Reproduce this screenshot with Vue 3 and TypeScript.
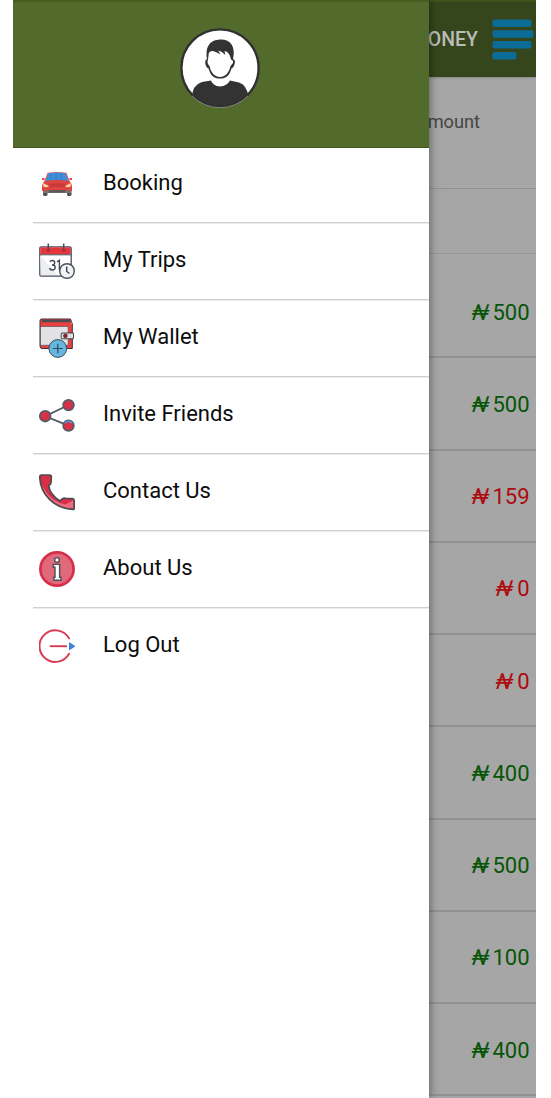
<script setup lang="ts">
interface MenuItem {
  label: string
  icon: string
}

interface Entry {
  amount: number
  credit: boolean
}

const menu: MenuItem[] = [
  { label: 'Booking', icon: 'car' },
  { label: 'My Trips', icon: 'calendar' },
  { label: 'My Wallet', icon: 'wallet' },
  { label: 'Invite Friends', icon: 'share' },
  { label: 'Contact Us', icon: 'phone' },
  { label: 'About Us', icon: 'info' },
  { label: 'Log Out', icon: 'logout' },
]

const entries: Entry[] = [
  { amount: 500, credit: true },
  { amount: 500, credit: true },
  { amount: 159, credit: false },
  { amount: 0, credit: false },
  { amount: 0, credit: false },
  { amount: 400, credit: true },
  { amount: 500, credit: true },
  { amount: 100, credit: true },
  { amount: 400, credit: true },
]
</script>

<template>
  <div class="screen">
    <main class="page">
      <header class="toolbar">
        <span class="toolbar-title">ONEY</span>
        <svg class="bars" width="42" height="42" viewBox="0 0 42 42" fill="#0b6d97">
          <rect x="0.5" y="0.5" width="39" height="7.5" rx="2" />
          <rect x="0.5" y="11.3" width="41" height="7.5" rx="2" />
          <rect x="0.5" y="22" width="39" height="7.5" rx="2" />
          <rect x="0.5" y="33" width="24" height="7.5" rx="2" />
        </svg>
      </header>
      <div class="field">mount</div>
      <div class="spacer"></div>
      <ul class="entries">
        <li v-for="(entry, i) in entries" :key="i" class="entry" :class="{ credit: entry.credit }">
          <span class="currency">₦</span>
          <span>{{ entry.amount }}</span>
        </li>
      </ul>
    </main>

    <aside class="drawer">
      <div class="profile">
        <svg width="80" height="80" viewBox="0 0 80 80">
          <defs>
            <clipPath id="face"><circle cx="40" cy="40" r="38.6" /></clipPath>
          </defs>
          <circle cx="40" cy="40" r="38.7" fill="#fff" />
          <g clip-path="url(#face)">
            <path d="M12 70Q12 57 22 54L31 52.5Q33 58 40 58.5Q47 58 50 52.5L59 54.5Q67 57 68.5 69V80H12z" fill="#333" />
            <path d="M27 31C25 17 31 12 40 11.5C50 11 56 18 53 31C57 32 54 40 51.5 40.5C49 49 45 50.5 40 50.5C35 50.5 31 49 28.5 40.5C25 39 24 32 27 31z" fill="#333" />
            <path d="M28.8 25Q30 22.5 33 23Q37 24 40.3 26.5L38.3 22.5Q42 23 45.3 27L44.5 23Q49.5 23.5 51 31.5Q53.5 32 53 35L50.5 38C49 45 45 49 40 49C35 49 31 45 29.5 38Q26.5 35 28 31.5z" fill="#fff" />
          </g>
          <circle cx="40" cy="40" r="38.6" fill="none" stroke="#2f3130" stroke-width="2.4" />
          <path d="M12 68A39.3 39.3 0 0 0 68 68" fill="none" stroke="#8b9083" stroke-width="0.9" />
        </svg>
      </div>

      <nav class="menu">
        <a v-for="item in menu" :key="item.label" class="item">
          <svg v-if="item.icon === 'car'" class="icon" viewBox="0 0 36 36">
            <rect x="4" y="24" width="4.5" height="6" rx="1.5" fill="#585353" />
            <rect x="28" y="24" width="4.5" height="6" rx="1.5" fill="#585353" />
            <path d="M8.5 6.8Q18 5.2 27.5 6.8L31 16H5z" fill="#e8615c" />
            <path d="M9.5 7.2Q18 6 26.5 7.2L29.6 15Q18 16 6.5 15z" fill="#3d8fda" />
            <path d="M12 8v7M17 8v7M22 8v7" stroke="#3580c8" stroke-width="1.2" />
            <path d="M3 12h2.5v2H3zM30.5 12H33v2h-2.5z" fill="#e84b4a" />
            <path d="M6 15Q18 13.2 30 15Q33 17 33 21V25H3V21Q3 17 6 15z" fill="#e04440" />
            <path d="M9 18Q18 16.5 27 18L25 21H11z" fill="#c8393a" />
            <path d="M4 17L10 20Q8 22 4.5 20.8zM32 17L26 20Q28 22 31.5 20.8z" fill="#ffd7a3" />
            <path d="M4 24.5H32V27H4z" fill="#7a7471" />
            <path d="M9 24H27L25.5 26.5H10.5z" fill="#5c5958" />
          </svg>

          <svg v-else-if="item.icon === 'calendar'" class="icon" viewBox="0 0 36 36">
            <rect x="0.8" y="3.8" width="31.4" height="29.4" rx="1.5" fill="#fff" stroke="#48505d" stroke-width="1.3" />
            <path d="M1 12L18 32H2z" fill="#eceef1" />
            <path d="M1.3 4.3H31.7V11.5H1.3z" fill="#e4353c" />
            <path d="M1 11.8H32" stroke="#48505d" stroke-width="1" />
            <path d="M9.3 0.5V7M24.7 0.5V7" stroke="#48505d" stroke-width="1.5" />
            <path d="M7.5 7.5H11M23 7.5H26.5" stroke="#a72834" stroke-width="1.4" />
            <path d="M11 18.8Q11.8 17.3 13.5 17.5Q16 17.8 15.7 20Q15.4 22 13 22Q16.3 22 16.2 24.5Q16 27 13.4 27Q11 27 10.5 25M18 18.8L20.4 17.3V27" fill="none" stroke="#414852" stroke-width="1.4" />
            <circle cx="28" cy="28" r="7.3" fill="#f2f3f4" stroke="#48505d" stroke-width="1.4" />
            <path d="M27.7 23.5V28.5L30.5 30.5" fill="none" stroke="#414852" stroke-width="1.4" />
          </svg>

          <svg v-else-if="item.icon === 'wallet'" class="icon" viewBox="0 0 36 40">
            <path d="M2 1H23V6H33.3V30.5H3Q1 30.5 1 28V3Q1 1 2 1z" fill="#e8413e" />
            <path d="M1.5 1H32V6H23z" fill="#e8413e" />
            <path d="M33.3 6L31.5 1H2.5Q1 1 1 3V28Q1 30.5 3 30.5H33.3z" fill="none" stroke="#34343c" stroke-width="1" />
            <path d="M3 2H31V4.2H3z" fill="#4b4b54" />
            <path d="M1.5 4.5L4 6.5H33V9H3z" fill="#e8413e" />
            <path d="M1.5 8.5H29.2V27.3H1.5z" fill="#e2e2e5" stroke="#44434b" stroke-width="0.6" />
            <path d="M22.5 15H34.5V20.8H22.5Q21.5 18 22.5 15z" fill="#e0e0e1" stroke="#35343a" stroke-width="0.9" />
            <circle cx="26.4" cy="17.8" r="1.9" fill="#9e1e25" stroke="#3d1b20" stroke-width="0.7" />
            <circle cx="18.8" cy="30.5" r="8.9" fill="#66b6df" stroke="#344b59" stroke-width="1" />
            <path d="M18.8 25.7V35.3M14 30.5H23.6" stroke="#284d62" stroke-width="1.2" />
          </svg>

          <svg v-else-if="item.icon === 'share'" class="icon" viewBox="0 0 36 36">
            <path d="M29.5 8.1L6.2 19.2L29.5 28.6" fill="none" stroke="#4b535d" stroke-width="1.7" />
            <g fill="#d9304a" stroke="#555b64" stroke-width="1.8">
              <circle cx="6.2" cy="19.2" r="5.3" />
              <circle cx="29.5" cy="8.1" r="5.3" />
              <circle cx="29.5" cy="28.6" r="5.3" />
            </g>
            <path d="M25.6 26.4A4.6 4.6 0 0 1 33.4 26.4" fill="none" stroke="#539bd5" stroke-width="1.5" />
          </svg>

          <svg v-else-if="item.icon === 'phone'" class="icon" viewBox="0 0 36 36">
            <path d="M2.4 1H10.5Q12.5 1 12.3 3L12 8.8Q11.7 10.5 9.7 11.6Q10.7 20.3 20.8 27L23.6 24.6Q24.5 24 26.5 24.3L33.5 24.7Q35.2 25 35.2 27V34.5Q35.2 35.3 34 35.3C15.5 34.7 1 20.3 0.8 3Q0.8 1 2.4 1z" fill="#d82f48" />
            <path d="M3.2 11Q10 27 26.5 30.5L34.5 26V34.5C17 34.5 5.5 23.5 3.2 11z" fill="#ef6b7e" />
            <path d="M2.4 1H10.5Q12.5 1 12.3 3L12 8.8Q11.7 10.5 9.7 11.6Q10.7 20.3 20.8 27L23.6 24.6Q24.5 24 26.5 24.3L33.5 24.7Q35.2 25 35.2 27V34.5Q35.2 35.3 34 35.3C15.5 34.7 1 20.3 0.8 3Q0.8 1 2.4 1z" fill="none" stroke="#4a4d52" stroke-width="1.7" />
          </svg>

          <svg v-else-if="item.icon === 'info'" class="icon" viewBox="0 0 36 36">
            <circle cx="18" cy="18" r="16.6" fill="#e06a7b" stroke="#d6304c" stroke-width="2.7" />
            <circle cx="18" cy="8.9" r="2.3" fill="#fff" stroke="#4c5059" stroke-width="1.4" />
            <path d="M14.3 13.4H20.6V26.3H22V29.3H14.8V26.3H16V16.2H14.3z" fill="#fff" stroke="#4c5059" stroke-width="1.4" />
          </svg>

          <svg v-else class="icon" viewBox="0 0 36 36">
            <path d="M30.1 10.4A15.8 15.8 0 1 0 30.1 25.8" fill="none" stroke="#d93a54" stroke-width="1.9" stroke-linecap="round" />
            <path d="M10.8 18.2H28" stroke="#d93a54" stroke-width="1.9" />
            <path d="M30 14.8Q30 14 30.8 14.4L35.5 17.5Q36.3 18.2 35.5 18.9L30.8 22Q30 22.4 30 21.6z" fill="#3d84da" />
          </svg>

          <span class="label">{{ item.label }}</span>
        </a>
      </nav>
    </aside>
  </div>
</template>

<style>
body {
  background: #fff;
}
</style>

<style scoped>
.screen {
  position: relative;
  width: 523px;
  height: 1098px;
  margin-left: 13px;
  overflow: hidden;
  font-family: Roboto, sans-serif;
  font-size: 22px;
}

.page {
  height: 100%;
  background: #a6a6a6;
}

.toolbar {
  box-sizing: border-box;
  display: flex;
  align-items: center;
  justify-content: flex-end;
  height: 77px;
  padding-right: 2px;
  background: #35461c;
  border-top: 2px solid #3d5219;
  box-shadow: 0 1px 2px #888;
}

.toolbar-title {
  margin-right: 14px;
  color: #bbbcb7;
  font-size: 19.5px;
  font-weight: 500;
}

.field {
  box-sizing: border-box;
  height: 112px;
  padding: 34px 56px 0 0;
  border-bottom: 1px solid #919191;
  color: #454545;
  font-size: 18.2px;
  line-height: 22px;
  text-align: right;
}

.spacer {
  box-sizing: border-box;
  height: 65px;
  border-bottom: 1px solid #979797;
}

.entries {
  margin: 0;
  padding: 12px 0 0;
  list-style: none;
}

.entry {
  box-sizing: border-box;
  display: flex;
  align-items: center;
  justify-content: flex-end;
  height: 92.25px;
  padding: 2px 6.5px 0 0;
  border-bottom: 2px solid #919191;
  color: #ad0b10;
}

.entry.credit {
  color: #075507;
}

.currency {
  margin-right: 4px;
  font-style: italic;
  transform: skewX(-9deg);
}

.drawer {
  position: absolute;
  inset: 0 auto 0 0;
  width: 416px;
  background: #fff;
  box-shadow: 0 0 9px rgba(0, 0, 0, 0.5);
}

.profile {
  box-sizing: border-box;
  display: flex;
  justify-content: center;
  height: 148px;
  padding: 26px 2px 0 0;
  background: #526b2c;
  border-top: 2px solid #455e20;
  border-bottom: 1px solid #40551f;
}

.menu {
  display: flex;
  flex-direction: column;
  padding-left: 20px;
}

.item {
  box-sizing: border-box;
  display: flex;
  align-items: center;
  height: 77px;
  padding: 0 0 2px 6px;
  border-bottom: 1px solid #cfcfcf;
  box-shadow: 0 1px 0 #ececec;
  color: #0c0c0c;
}

.item:first-child {
  height: 75px;
  padding-bottom: 4px;
}

.item:last-child {
  border-bottom: 0;
  box-shadow: none;
  padding-bottom: 3px;
}

.icon {
  flex: none;
  width: 36px;
  height: 40px;
  margin-top: 2px;
}

.label {
  margin: -1px 0 0 28px;
}
</style>
